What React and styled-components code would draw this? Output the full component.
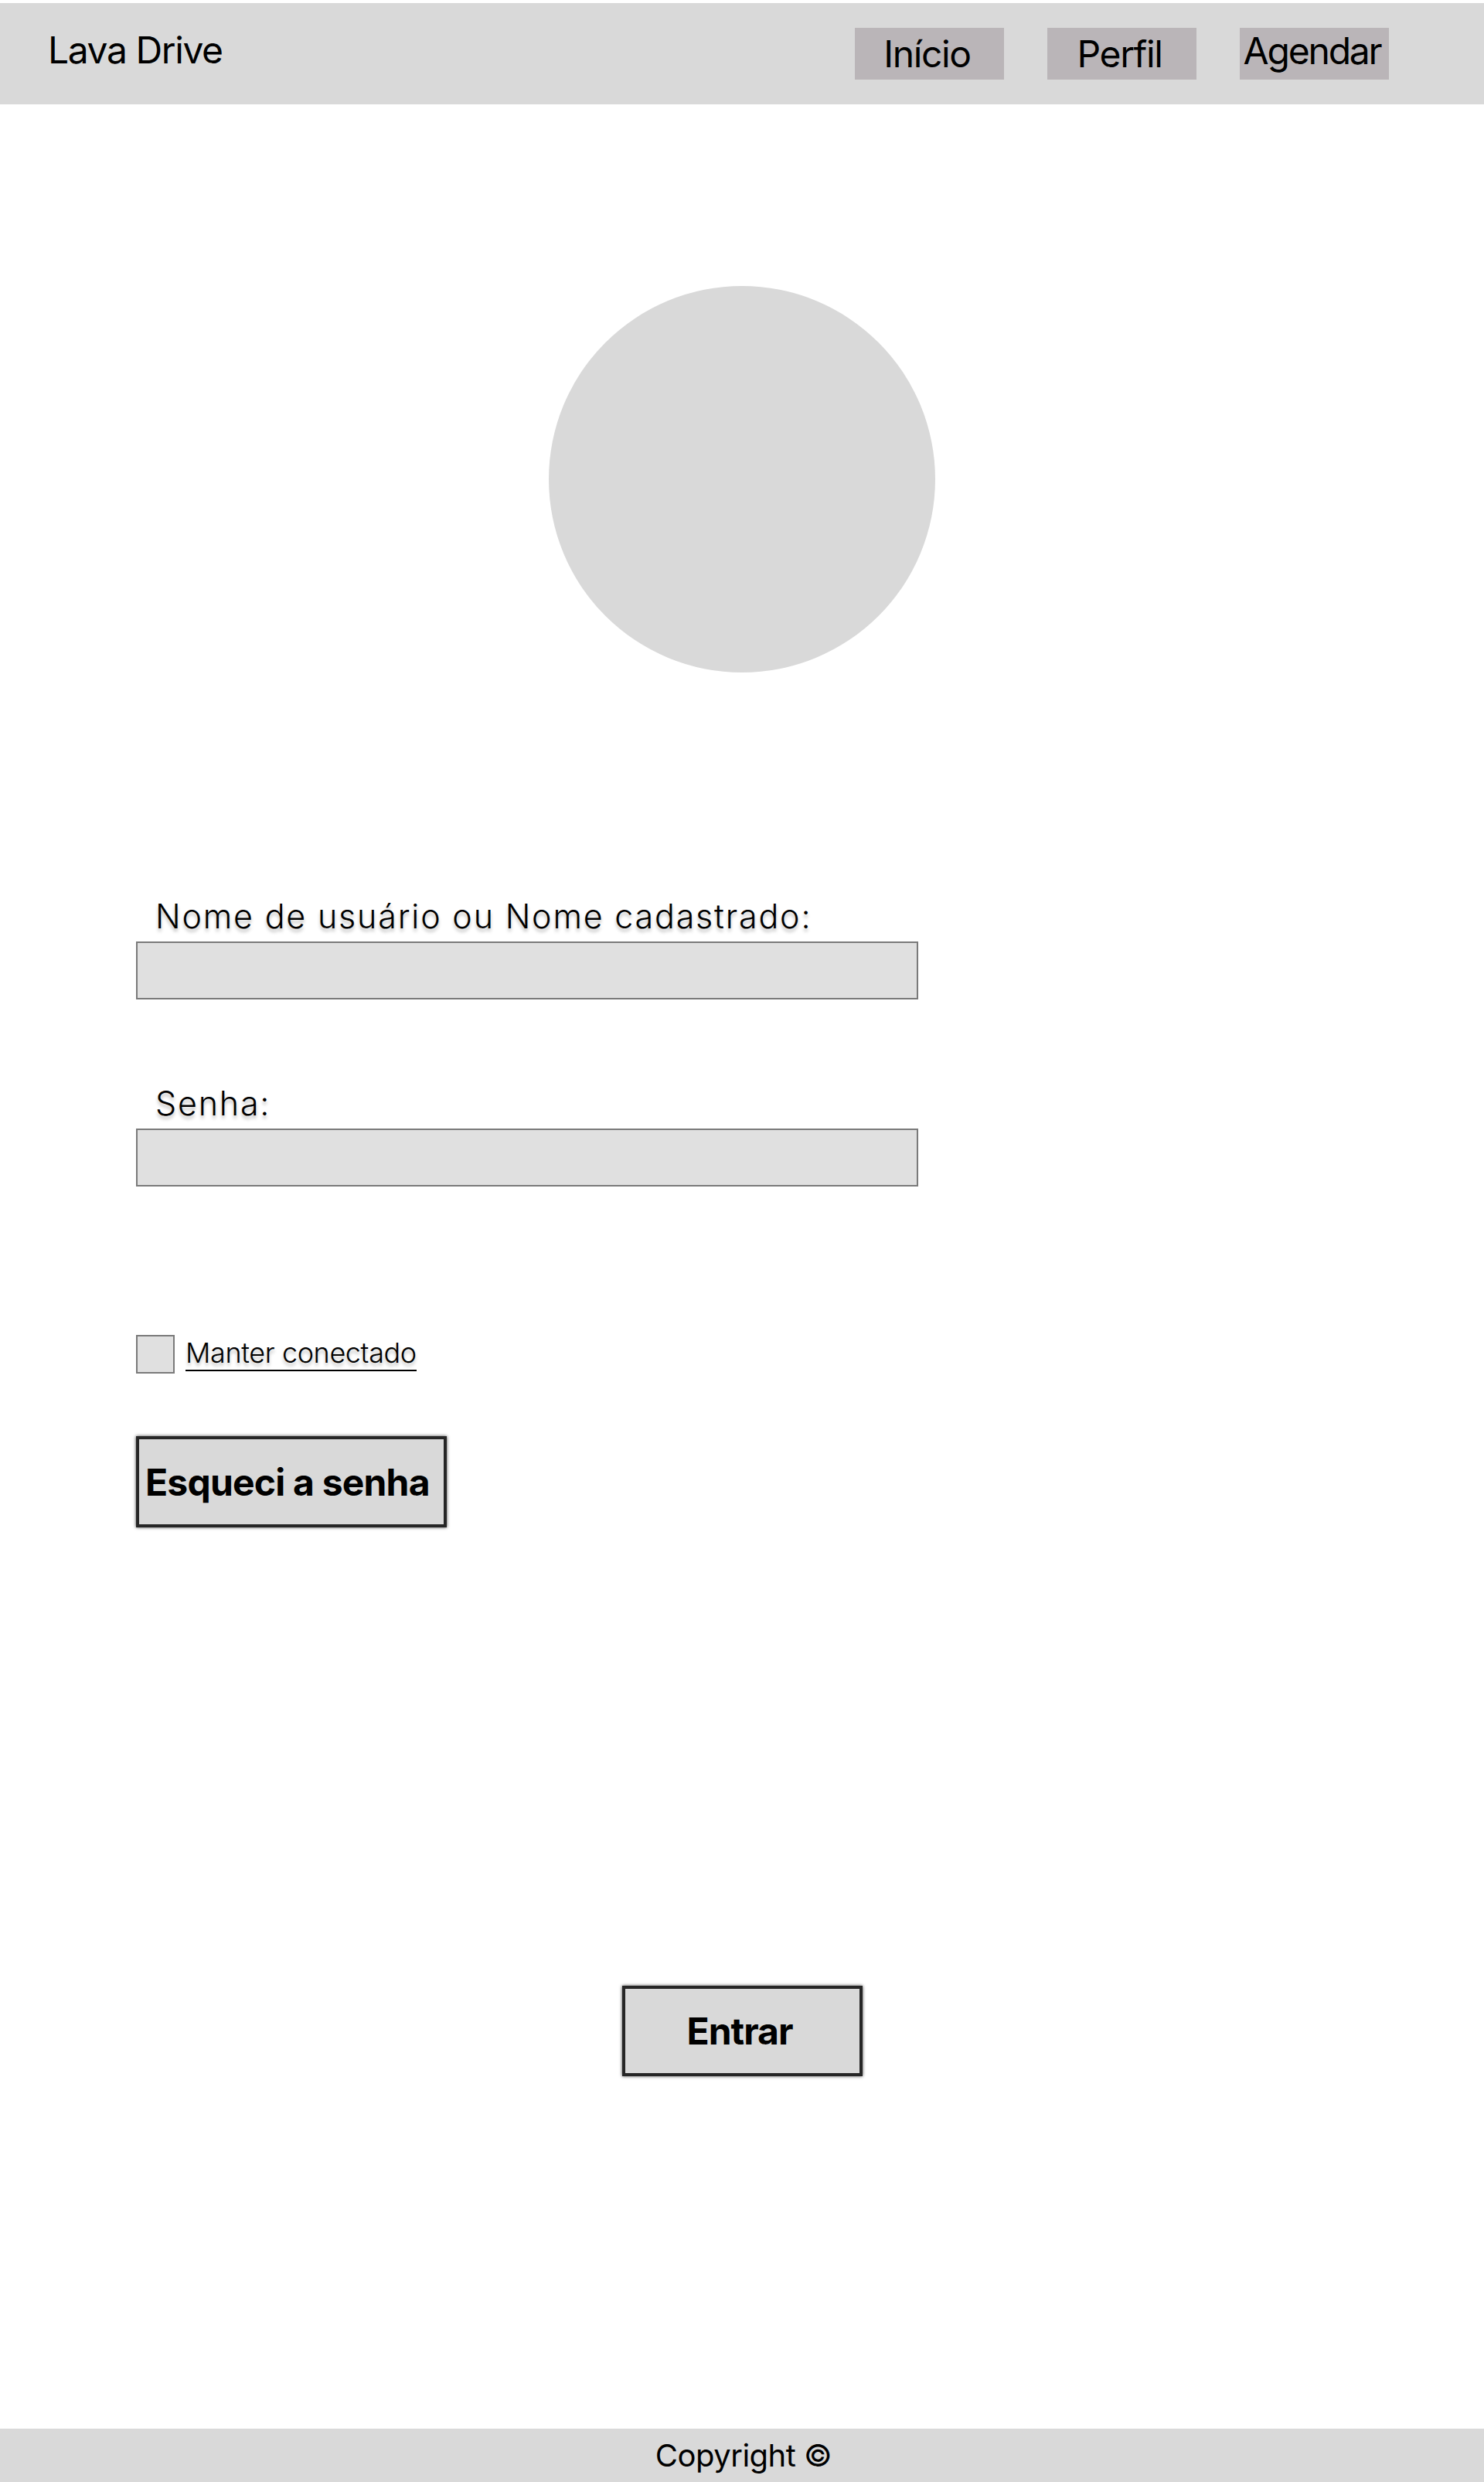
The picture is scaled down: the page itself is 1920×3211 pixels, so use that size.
import styled, { createGlobalStyle } from "styled-components";

const GlobalStyle = createGlobalStyle`
  html, body {
    margin: 0;
    padding: 0;
    background: #ffffff;
  }
  * {
    box-sizing: border-box;
  }
`;

export default function App() {
  return (
    <>
      <GlobalStyle />
      <Page>
        <Header>
          <Brand>Lava Drive</Brand>
          <Nav>
            <NavButton>Início</NavButton>
            <NavButton>Perfil</NavButton>
            <NavButton $plain>Agendar</NavButton>
          </Nav>
        </Header>

        <Main>
          <Avatar />

          <Form>
            <Label>Nome de usuário ou Nome cadastrado:</Label>
            <Input type="text" />

            <Label $top={109}>Senha:</Label>
            <Input type="password" />

            <CheckRow>
              <Checkbox />
              <CheckText>Manter conectado</CheckText>
            </CheckRow>

            <ForgotButton>Esqueci a senha</ForgotButton>
          </Form>

          <EnterButton>Entrar</EnterButton>
        </Main>

        <Footer>Copyright ©</Footer>
      </Page>
    </>
  );
}

const Page = styled.div`
  display: flex;
  flex-direction: column;
  min-height: 3211px;
  padding-top: 4px;
  font-family: Inter, "Noto Sans", sans-serif;
  color: #000000;
`;

const Header = styled.header`
  height: 131px;
  background-color: #d9d9d9;
  display: flex;
  align-items: flex-start;
  padding-left: 62px;
  padding-right: 123px;
`;

const Brand = styled.div`
  margin-top: 31px;
  font-size: 48px;
  font-weight: 400;
  line-height: normal;
  letter-spacing: -1.4px;
`;

const Nav = styled.nav`
  margin-left: auto;
  margin-top: 32px;
  display: flex;
  gap: 56px;
`;

const NavButton = styled.div`
  width: 193px;
  height: 67px;
  background-color: #bab5b8;
  font-size: 48px;
  line-height: normal;
  letter-spacing: ${(p) => (p.$plain ? "-2.2px" : "-1.4px")};
  text-align: center;
  padding-top: ${(p) => (p.$plain ? "0" : "4px")};
  padding-right: 6px;
  cursor: pointer;
`;

const Main = styled.main`
  flex: 1;
  display: flex;
  flex-direction: column;
`;

const Avatar = styled.div`
  width: 500px;
  height: 500px;
  border-radius: 50%;
  background-color: #d9d9d9;
  align-self: center;
  margin-top: 235px;
`;

const Form = styled.form`
  display: flex;
  flex-direction: column;
  align-items: flex-start;
  padding-left: 176px;
  margin-top: 290px;
`;

const Label = styled.label`
  margin-top: ${(p) => (p.$top ? `${p.$top}px` : "0")};
  margin-left: 25px;
  font-size: 43px;
  line-height: 50px;
  font-weight: 300;
  letter-spacing: 1.8px;
  text-shadow: 0 4px 4px rgba(0, 0, 0, 0.25);
`;

const Input = styled.input`
  margin-top: 8px;
  width: 1012px;
  height: 75px;
  background-color: #e0e0e0;
  border: 2px solid #7a7a7a;
  border-radius: 0;
  outline: none;
`;

const CheckRow = styled.div`
  margin-top: 192px;
  display: flex;
  align-items: flex-start;
  gap: 14px;
`;

const Checkbox = styled.div`
  width: 50px;
  height: 50px;
  background-color: #e0e0e0;
  border: 2px solid #7a7a7a;
`;

const CheckText = styled.span`
  margin-top: 3px;
  font-size: 36px;
  font-weight: 300;
  line-height: 40px;
  letter-spacing: -0.4px;
  padding-bottom: 2px;
  border-bottom: 2px solid #000000;
  text-shadow: 0 4px 4px rgba(0, 0, 0, 0.25);
  cursor: pointer;
`;

const ForgotButton = styled.button`
  margin-top: 81px;
  width: 402px;
  height: 118px;
  display: flex;
  align-items: center;
  padding: 0 0 0 8px;
  background-color: #d9d9d9;
  border: 4px solid #262626;
  box-shadow: 0 0 4px rgba(0, 0, 0, 0.75);
  font-family: Inter, "Noto Sans", sans-serif;
  font-size: 48px;
  font-weight: 700;
  letter-spacing: -0.8px;
  color: #000000;
  cursor: pointer;
`;

const EnterButton = styled.button`
  align-self: center;
  margin-top: 593px;
  width: 311px;
  height: 117px;
  display: flex;
  align-items: center;
  justify-content: center;
  padding: 0 6px 0 0;
  background-color: #d9d9d9;
  border: 4px solid #262626;
  box-shadow: 0 0 4px rgba(0, 0, 0, 0.75);
  font-family: Inter, "Noto Sans", sans-serif;
  font-size: 48px;
  font-weight: 700;
  letter-spacing: -1px;
  color: #000000;
  cursor: pointer;
`;

const Footer = styled.footer`
  height: 69px;
  background-color: #d9d9d9;
  display: flex;
  align-items: center;
  justify-content: center;
  padding-left: 4px;
  font-size: 40px;
  line-height: normal;
  letter-spacing: -0.5px;
`;
